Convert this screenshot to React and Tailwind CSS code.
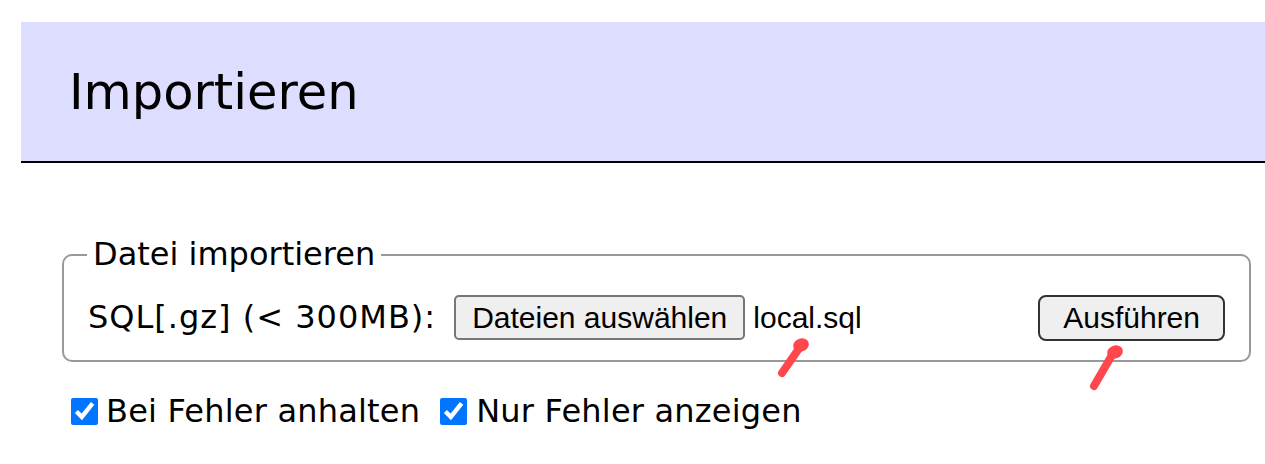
import React from 'react';

const verdana = { fontFamily: '"DejaVu Sans", Verdana, sans-serif' };

function Marker({ x1, y1, x2, y2, hx, hy }) {
  return (
    <g>
      <line x1={x1} y1={y1} x2={x2} y2={y2} stroke="#ff474d" strokeWidth="8" strokeLinecap="round" />
      <ellipse cx={hx} cy={hy} rx="8" ry="6.5" fill="#ff474d" transform={`rotate(-20 ${hx} ${hy})`} />
    </g>
  );
}

export default function App() {
  return (
    <div className="relative w-[1265px] h-[464px] bg-white overflow-hidden">
      <div className="ml-[21px] pt-[22px]">
        <div className="h-[141px] bg-[#ddddff] border-b-2 border-black flex items-center pl-[48px]">
          <h1 className="text-[49.5px] leading-[56px] text-black font-normal font-['DejaVu_Sans',Verdana,sans-serif]">
            Importieren
          </h1>
        </div>

        <fieldset className="mt-[73px] ml-[41px] mr-[14px] border-2 border-[#999999] rounded-[10px] pl-[24px] pr-[24px] pb-[20px] pt-[22px] font-['DejaVu_Sans',Verdana,sans-serif]">
          <legend className="px-[6px] text-[32px] leading-[37px] text-black -ml-[1px]">
            Datei importieren
          </legend>
          <div className="flex items-center h-[45px]">
            <span className="text-[32px] leading-[37px] tracking-[1px] text-black">SQL[.gz] (&lt; 300MB):</span>
            <button
              type="button"
              className="ml-[18px] h-[45px] px-[16px] bg-[#efefef] border-2 border-[#767676] rounded-[5px] text-[30px] leading-[34px] text-black font-['Liberation_Sans',Arial,sans-serif]"
            >
              Dateien auswählen
            </button>
            <span className="ml-[8px] text-[30px] leading-[34px] text-black font-['Liberation_Sans',Arial,sans-serif]">
              local.sql
            </span>
            <button
              type="button"
              className="ml-auto h-[46px] px-[23px] bg-[#efefef] border-2 border-[#333333] rounded-[8px] text-[30px] leading-[34px] text-black font-['Liberation_Sans',Arial,sans-serif]"
            >
              Ausführen
            </button>
          </div>
        </fieldset>

        <div className="flex items-center mt-[31px] ml-[50px] text-[32px] leading-[37px] text-black" style={verdana}>
          <label className="flex items-center">
            <input type="checkbox" defaultChecked className="w-[27px] h-[27px] m-0" />
            <span className="ml-[8px] tracking-[0.2px]">Bei Fehler anhalten</span>
          </label>
          <label className="flex items-center ml-[20px]">
            <input type="checkbox" defaultChecked className="w-[27px] h-[27px] m-0" />
            <span className="ml-[9px] tracking-[0.2px]">Nur Fehler anzeigen</span>
          </label>
        </div>
      </div>

      <svg className="absolute left-0 top-0 pointer-events-none" width="1265" height="464">
        <Marker x1={782} y1={373} x2={800} y2={347} hx={801} hy={345} />
        <Marker x1={1094} y1={386} x2={1112} y2={355} hx={1115} hy={352} />
      </svg>
    </div>
  );
}
